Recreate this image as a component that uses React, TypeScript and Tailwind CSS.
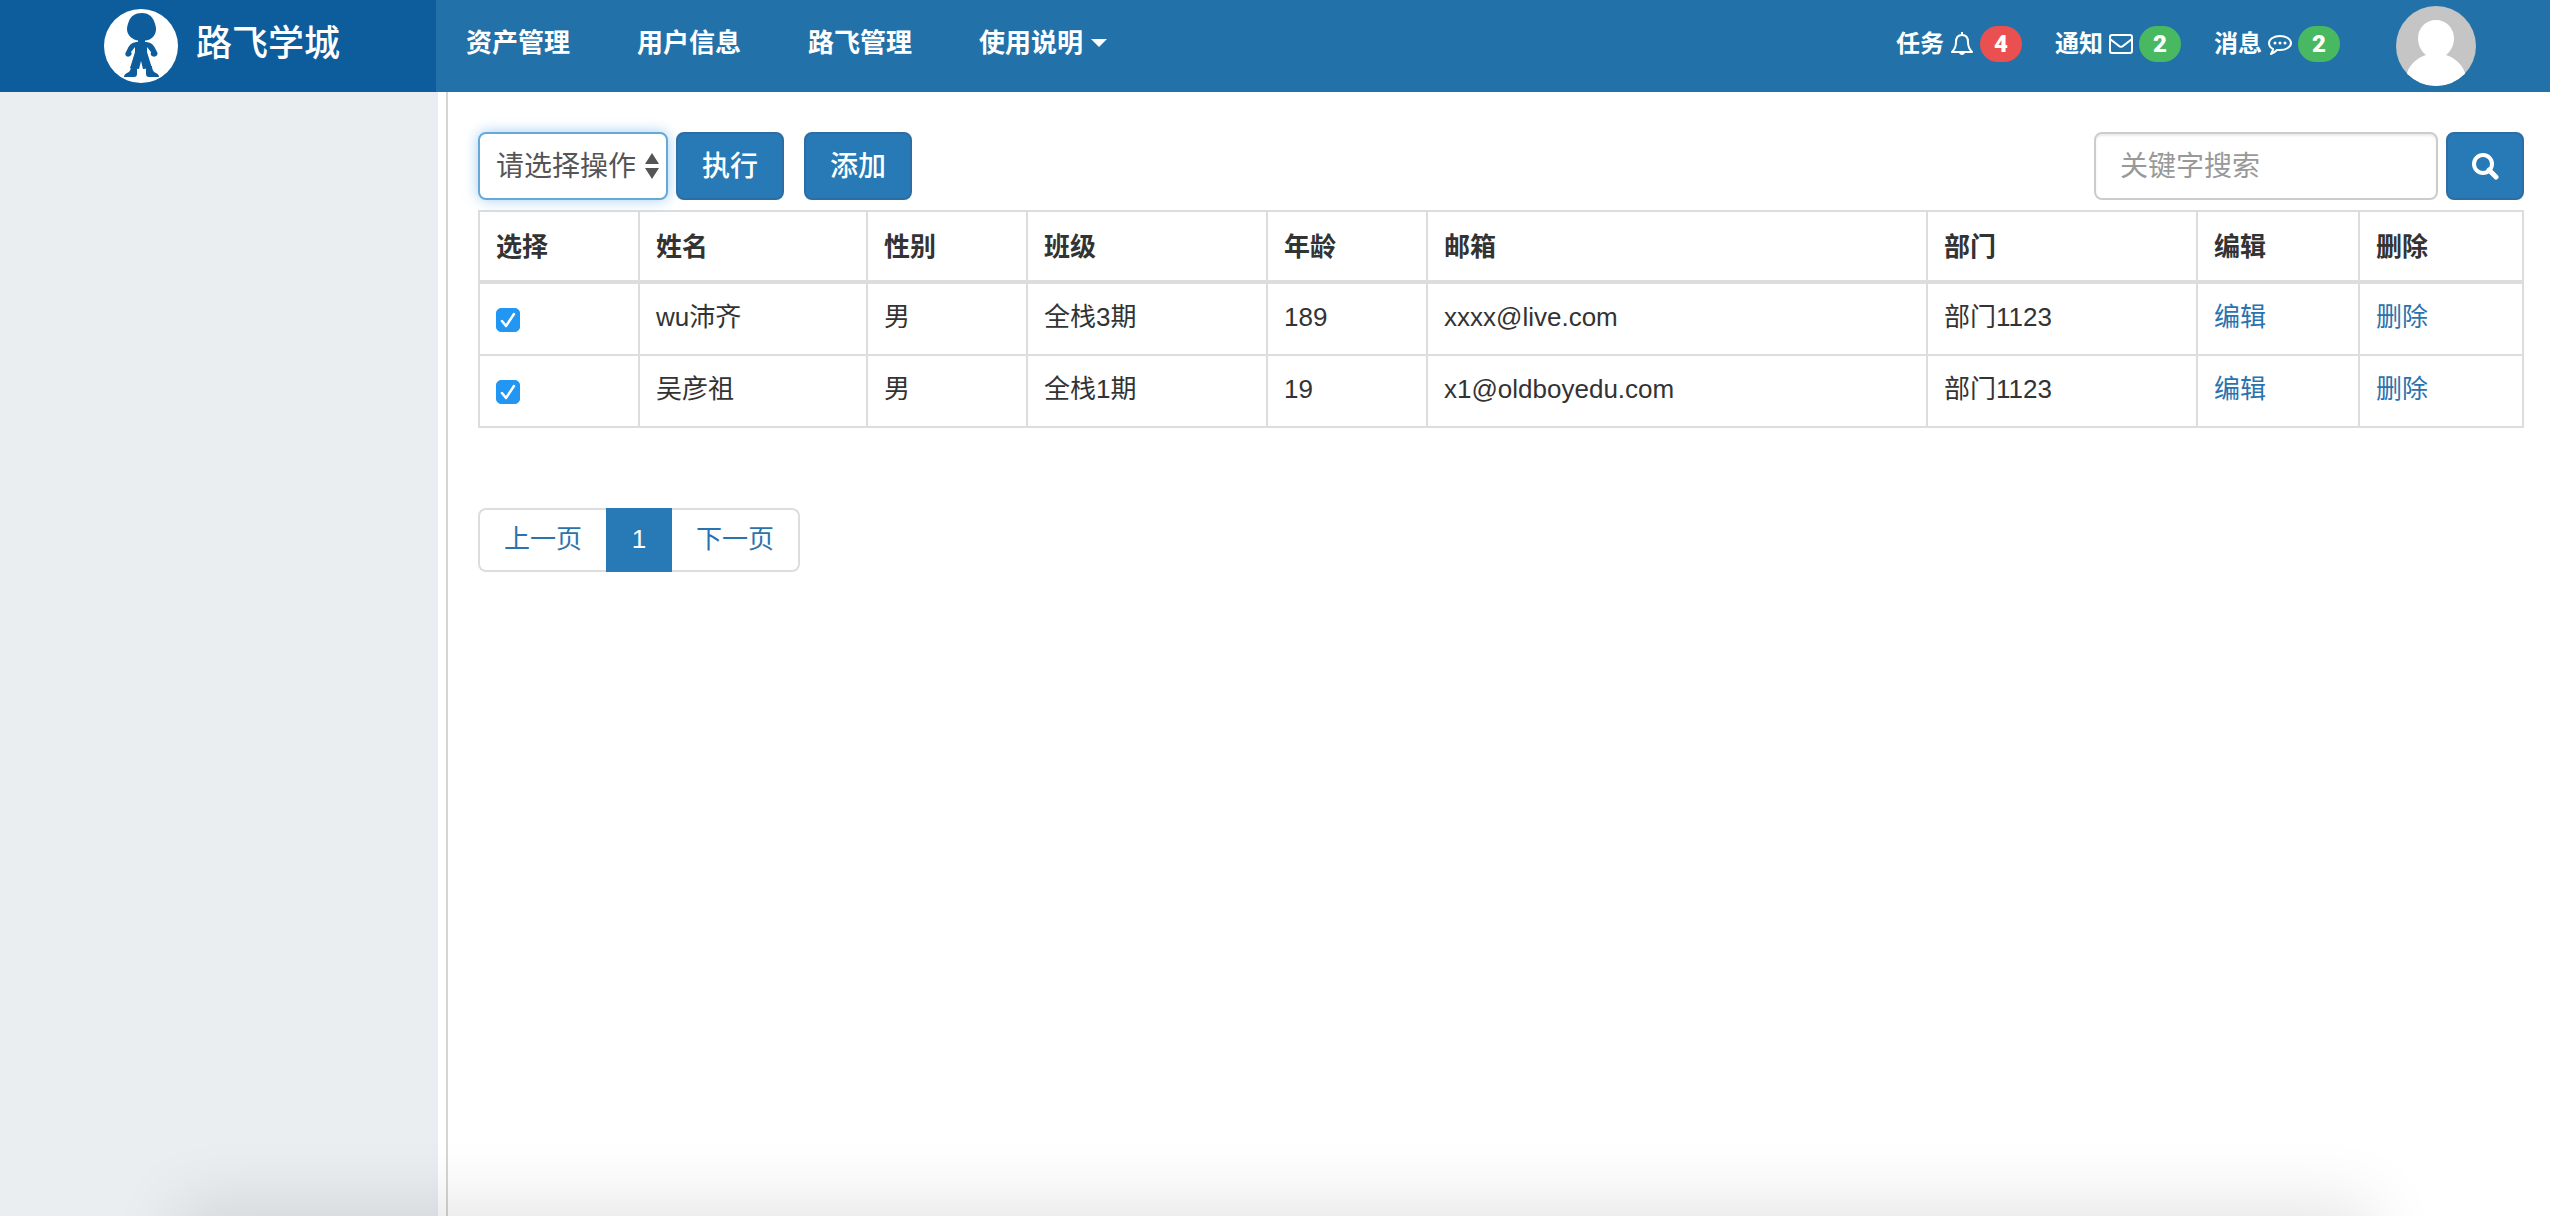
import React from 'react';

interface Student {
  id: number;
  name: string;
  gender: string;
  grade: string;
  age: number;
  email: string;
  depart: string;
}

interface NoticeProps {
  text: string;
  count: number;
  badgeClass: string;
  children: React.ReactNode;
}

const students: Student[] = [
  { id: 1, name: 'wu沛齐', gender: '男', grade: '全栈3期', age: 189, email: 'xxxx@live.com', depart: '部门1123' },
  { id: 2, name: '吴彦祖', gender: '男', grade: '全栈1期', age: 19, email: 'x1@oldboyedu.com', depart: '部门1123' },
];

const columns = [
  { title: '选择', width: 'w-[160px]' },
  { title: '姓名', width: 'w-[228px]' },
  { title: '性别', width: 'w-[160px]' },
  { title: '班级', width: 'w-[240px]' },
  { title: '年龄', width: 'w-[160px]' },
  { title: '邮箱', width: '' },
  { title: '部门', width: 'w-[270px]' },
  { title: '编辑', width: 'w-[162px]' },
  { title: '删除', width: 'w-[164px]' },
];

const menus = ['资产管理', '用户信息', '路飞管理'];

const Logo: React.FC = () => (
  <svg width="74" height="74" viewBox="0 0 74 74" aria-hidden="true">
    <circle cx="37" cy="37" r="37" fill="#fff" />
    <g fill="#0d5c9c">
      <path d="M38 4c-7 0-11 3-13 8-1 3-2 5-2 8 0 6 5 10.500 11 11.500h8C48 30.500 52 26 52 20c0-3-1-5-2-8-2-5-6-8-12-8z" />
      <path d="M34 30h7v3c5 0 8 2 10 6l2 4c2 3-2 6-5 4-2-1-1-3-1-4l-4-5v5l4 13 1 3-9 1-2-8-2 8-9-1 1-3 4-13v-5l-4 5c1 1 1 3-1 4-3 2-6-1-4-4l2-4c2-4 5-6 10-6z" />
      <path d="M27 57l6 2v6c0 2-1 3-3 3H20c0-2 1-3 3-4 3-1 4-4 4-7z" />
      <path d="M48 57l-6 2v6c0 2 1 3 3 3h10c0-2-1-3-3-4-3-1-4-4-4-7z" />
    </g>
  </svg>
);

const BellIcon: React.FC = () => (
  <svg width="24" height="24" viewBox="0 0 24 24" fill="none" stroke="#fff" strokeWidth="2" aria-hidden="true">
    <path d="M12 0v3" />
    <path d="M12 3C8 3 6 6 6 10c0 5-1 7-4 10h20c-3-3-4-5-4-10 0-4-2-7-6-7z" strokeLinejoin="round" />
    <path d="M9 20c0 4 6 4 6 0z" fill="#fff" stroke="none" />
  </svg>
);

const MailIcon: React.FC = () => (
  <svg width="24" height="24" viewBox="0 0 24 24" fill="none" stroke="#fff" strokeWidth="2" aria-hidden="true">
    <rect x="1" y="3" width="22" height="18" rx="2" />
    <path d="M1 7l9 7c1 1 3 1 4 0l9-7" />
  </svg>
);

const CommentIcon: React.FC = () => (
  <svg width="24" height="24" viewBox="0 0 24 24" fill="none" stroke="#fff" strokeWidth="2" aria-hidden="true">
    <path d="M12 4C6 4 1 7 1 11c0 3 2 5 4 6 0 2-1 3-2 5 3-1 4-2 6-4h3c6 0 11-3 11-7s-5-7-11-7z" strokeLinejoin="round" />
    <g fill="#fff" stroke="none">
      <circle cx="7" cy="11" r="1.500" />
      <circle cx="12" cy="11" r="1.500" />
      <circle cx="17" cy="11" r="1.500" />
    </g>
  </svg>
);

const Notice: React.FC<NoticeProps> = ({ text, count, badgeClass, children }) => (
  <a href="#" className="flex items-center gap-[6px] text-[24px] font-bold">
    <span>{text}</span>
    {children}
    <span className={`flex h-9 w-[42px] items-center justify-center rounded-full font-['Roboto','Liberation_Sans',sans-serif] font-black ${badgeClass}`}>
      {count}
    </span>
  </a>
);

const Header: React.FC = () => (
  <header className="flex h-[92px] shrink-0 bg-[#2272a9] text-white">
    <div className="flex w-[436px] shrink-0 items-center gap-[18px] bg-[#0d5c9c] pl-[104px]">
      <Logo />
      <span className="pb-1 text-[36px] font-medium">路飞学城</span>
    </div>
    <nav className="flex items-center gap-[67px] pb-[6px] pl-[30px] text-[26px] font-bold">
      {menus.map((item) => (
        <a key={item} href="#">
          {item}
        </a>
      ))}
      <a href="#" className="flex items-center gap-2">
        使用说明
        <svg width="16" height="8" viewBox="0 0 16 8" aria-hidden="true">
          <path d="M0 0h16l-8 8z" fill="#fff" />
        </svg>
      </a>
    </nav>
    <div className="ml-auto flex items-center pr-[74px]">
      <div className="flex items-center gap-[33px] pb-1">
        <Notice text="任务" count={4} badgeClass="bg-[#e9504f]">
          <BellIcon />
        </Notice>
        <Notice text="通知" count={2} badgeClass="bg-[#49b961]">
          <MailIcon />
        </Notice>
        <Notice text="消息" count={2} badgeClass="bg-[#49b961]">
          <CommentIcon />
        </Notice>
      </div>
      <svg className="ml-14" width="80" height="80" viewBox="0 0 80 80" role="img" aria-label="avatar">
        <defs>
          <clipPath id="avatar">
            <circle cx="40" cy="40" r="40" />
          </clipPath>
        </defs>
        <g clipPath="url(#avatar)">
          <rect width="80" height="80" fill="#c5c5c5" />
          <path
            d="M40 14c-10 0-18 8-18 18 0 7 3 13 8 17-9 3-16 9-19 18v13h58V67c-3-9-10-15-19-18 5-4 8-10 8-17 0-10-8-18-18-18z"
            fill="#fff"
          />
        </g>
      </svg>
    </div>
  </header>
);

const Toolbar: React.FC = () => (
  <div className="flex h-[68px] items-center text-[28px]">
    <div className="relative h-full w-[190px]">
      <select
        aria-label="请选择操作"
        className="h-full w-full appearance-none rounded-lg border-2 border-[#66a9d8] bg-white pt-0.5 pl-4 text-[#555] shadow-[0_0_14px_rgba(102,175,233,0.6)] outline-none"
      >
        <option>请选择操作</option>
      </select>
      <svg className="pointer-events-none absolute top-[21px] right-[9px]" width="14" height="26" viewBox="0 0 14 26" aria-hidden="true">
        <path d="M0 11h14L7 0zM0 15h14L7 26z" fill="#555" />
      </svg>
    </div>
    <button className="ml-2 h-full w-[108px] rounded-lg border-2 border-[#2e6da4] bg-[#277ab5] pt-0.5 font-medium text-white">执行</button>
    <button className="ml-5 h-full w-[108px] rounded-lg border-2 border-[#2e6da4] bg-[#277ab5] pt-0.5 font-medium text-white">添加</button>
    <form className="ml-auto flex h-full gap-2">
      <input
        type="text"
        aria-label="关键字搜索"
        placeholder="关键字搜索"
        className="h-full w-[344px] rounded-lg border-2 border-[#ccc] px-6 pt-0.5 shadow-[inset_0_2px_2px_rgba(0,0,0,0.075)] placeholder:text-[#999]"
      />
      <button type="button" aria-label="搜索" className="flex h-full w-[78px] items-center justify-center rounded-lg border-2 border-[#2e6da4] bg-[#277ab5]">
        <svg width="28" height="28" viewBox="0 0 28 28" fill="none" stroke="#fff" strokeWidth="4" aria-hidden="true">
          <circle cx="12" cy="12" r="9" />
          <path d="M18 18l7 7" strokeWidth="5" strokeLinecap="round" />
        </svg>
      </button>
    </form>
  </div>
);

const CheckBox: React.FC<{ label: string }> = ({ label }) => (
  <div className="relative mt-1.5 size-6">
    <input
      type="checkbox"
      defaultChecked
      aria-label={label}
      className="peer block size-6 appearance-none rounded-[5px] border border-[#bbb] bg-white checked:border-[#2196f3] checked:bg-[#2196f3]"
    />
    <svg
      className="pointer-events-none absolute inset-0 hidden peer-checked:block"
      width="24"
      height="24"
      viewBox="0 0 24 24"
      fill="none"
      stroke="#fff"
      strokeWidth="2.500"
      strokeLinecap="round"
      strokeLinejoin="round"
      aria-hidden="true"
    >
      <path d="M6 13l4 5 8-12" />
    </svg>
  </div>
);

const cell = 'border-2 border-[#ddd] px-4 pt-3 pb-4 align-middle';

const StudentTable: React.FC = () => (
  <table className="mt-[10px] w-full table-fixed border-collapse border-2 border-[#ddd] text-left text-[26px] leading-[42px]">
    <thead>
      <tr>
        {columns.map((col) => (
          <th key={col.title} className={`border-2 border-b-4 border-[#ddd] px-4 pt-[14px] pb-3 font-bold ${col.width}`}>
            {col.title}
          </th>
        ))}
      </tr>
    </thead>
    <tbody>
      {students.map((student) => (
        <tr key={student.id}>
          <td className={cell}>
            <CheckBox label={student.name} />
          </td>
          <td className={cell}>{student.name}</td>
          <td className={cell}>{student.gender}</td>
          <td className={cell}>{student.grade}</td>
          <td className={cell}>{student.age}</td>
          <td className={cell}>{student.email}</td>
          <td className={cell}>{student.depart}</td>
          <td className={cell}>
            <a href="#" className="text-[#2a73ae]">编辑</a>
          </td>
          <td className={cell}>
            <a href="#" className="text-[#2a73ae]">删除</a>
          </td>
        </tr>
      ))}
    </tbody>
  </table>
);

const Pagination: React.FC = () => (
  <nav aria-label="分页" className="mt-20 flex h-16 text-[26px] leading-[58px] text-[#2a73ae]">
    <a href="#" className="w-32 rounded-l-lg border-2 border-r-0 border-[#ddd] text-center">上一页</a>
    <a href="#" className="w-[66px] border-2 border-[#277ab5] bg-[#277ab5] text-center text-white">1</a>
    <a href="#" className="w-32 rounded-r-lg border-2 border-l-0 border-[#ddd] text-center">下一页</a>
  </nav>
);

export default function App() {
  return (
    <div className="relative flex min-h-screen flex-col overflow-hidden bg-white font-['Liberation_Sans','Noto_Sans_CJK_SC',sans-serif] text-[#333]">
      <Header />
      <div className="flex grow">
        <aside className="w-[438px] shrink-0 border-r-4 border-[#ebebf7] bg-[#eaeef1]" />
        <main className="ml-2 min-w-0 grow border-l-2 border-[#d5d5d5] pt-10 pr-[26px] pl-[30px]">
          <Toolbar />
          <StudentTable />
          <Pagination />
        </main>
      </div>
      {/* soft shade along the bottom edge */}
      <div className="pointer-events-none absolute inset-x-[190px] top-full h-20 shadow-[0_0_70px_12px_rgba(0,0,0,0.11)]" />
    </div>
  );
}
